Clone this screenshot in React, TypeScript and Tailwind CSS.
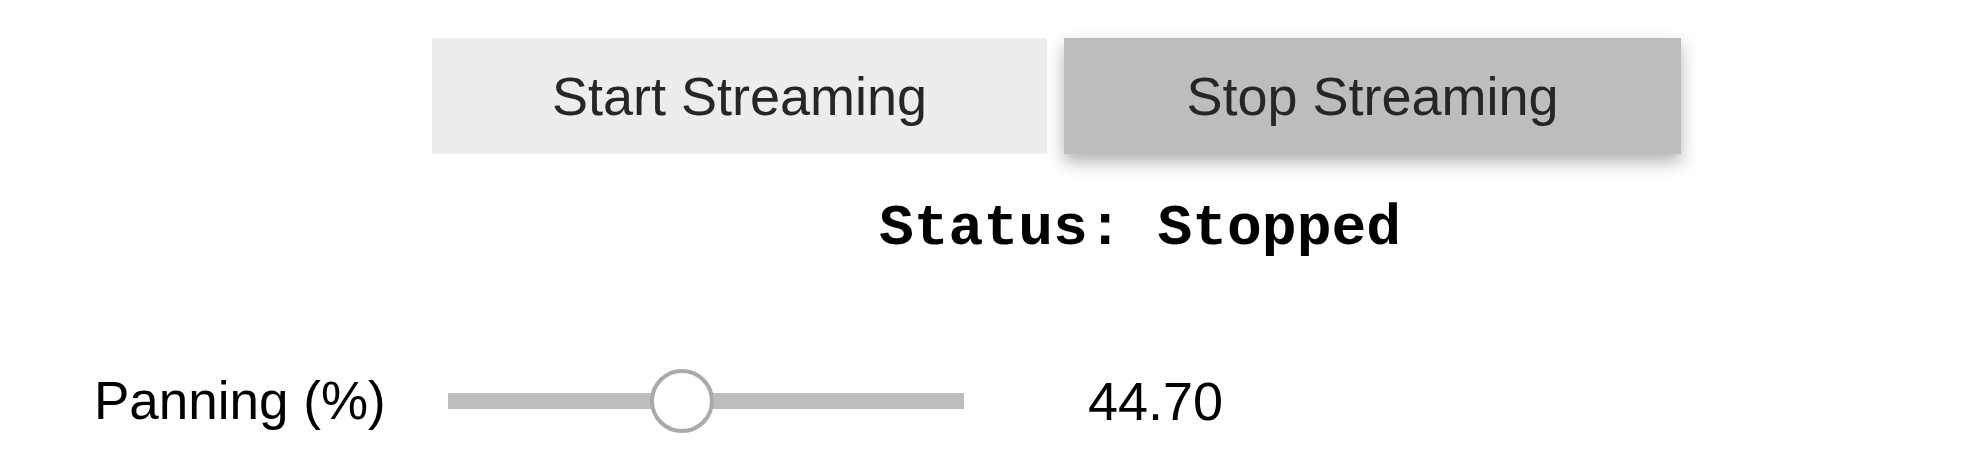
import React from "react";

export default function App() {
  const value = 44.7;
  const trackW = 516;
  const thumb = 64;
  const thumbLeft = (value / 100) * (trackW - thumb);
  return (
    <div className="w-[1979px] h-[466px] bg-white overflow-hidden" style={{ fontFamily: '"Liberation Sans", Arial, sans-serif' }}>
      <div className="flex pt-[38px] pl-[432px] gap-[17px]">
        <button className="w-[615px] h-[116px] bg-[#ededed] text-[#262626] text-[54px] flex items-center justify-center">
          Start Streaming
        </button>
        <button className="w-[617px] h-[116px] bg-[#bdbdbd] text-[#262626] text-[54px] flex items-center justify-center shadow-[0_8px_16px_rgba(0,0,0,0.3)]">
          Stop Streaming
        </button>
      </div>
      <div
        className="mt-[39px] pl-[879px] text-[58px] leading-[72px] font-bold text-black whitespace-pre"
        style={{ fontFamily: '"Liberation Mono", "Courier New", monospace' }}
      >
        Status: Stopped
      </div>
      <div className="mt-[104px] flex items-center h-[64px]">
        <div className="w-[448px] pl-[94px] text-[53px] text-black">Panning (%)</div>
        <div className="relative w-[516px] h-[16px] bg-[#bdbdbd]">
          <div
            className="absolute top-1/2 -translate-y-1/2 w-[64px] h-[64px] rounded-full bg-white border-[4px] border-[#aaaaaa]"
            style={{ left: thumbLeft }}
          />
        </div>
        <div className="ml-[124px] text-[54px] text-black">44.70</div>
      </div>
    </div>
  );
}
